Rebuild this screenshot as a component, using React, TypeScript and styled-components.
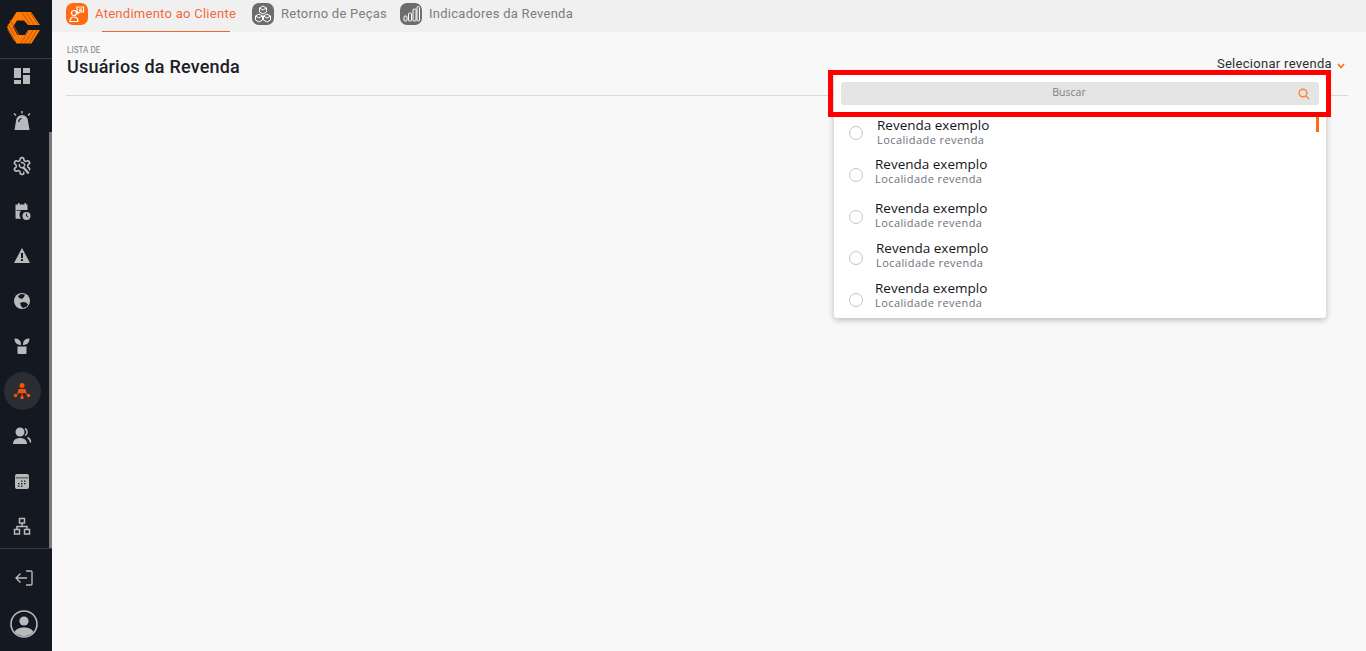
import React from 'react';
import styled, { createGlobalStyle } from 'styled-components';

const orange = '#ff6a13';
const iconGray = '#b9babc';

const GlobalStyle = createGlobalStyle`
  html, body {
    margin: 0;
    height: 100%;
    overflow: hidden;
    background: #f8f8f8;
    font-family: 'Roboto', 'Liberation Sans', sans-serif;
  }
`;

const Page = styled.div`
  display: flex;
  width: 100%;
  height: 651px;
  overflow: hidden;
`;

const SideBar = styled.aside`
  flex: 0 0 52px;
  display: flex;
  flex-direction: column;
  background: #141820;
`;

const LogoArea = styled.div`
  flex: 0 0 59px;
  box-sizing: border-box;
  padding: 12px 0 0 7px;
  border-bottom: 1px solid #3a3d42;
`;

const NavArea = styled.nav`
  position: relative;
  flex: 1;
  display: flex;
  flex-direction: column;
  gap: 25px;
  padding: 7px 0 0 12px;
`;

const ScrollThumb = styled.div`
  position: absolute;
  top: 73px;
  right: 0;
  bottom: 0;
  width: 3px;
  background: #77787b;
`;

const NavItem = styled.div<{ $active?: boolean }>`
  position: relative;
  width: 20px;
  height: 20px;
  color: ${({ $active }) => ($active ? '#ff4f0a' : iconGray)};
  svg {
    position: relative;
    display: block;
    width: 20px;
    height: 20px;
  }
  &::before {
    content: '';
    display: ${({ $active }) => ($active ? 'block' : 'none')};
    position: absolute;
    top: -9px;
    left: -8px;
    width: 37px;
    height: 38px;
    border-radius: 50%;
    background: #2a2d31;
  }
`;

const BottomArea = styled.div`
  flex: 0 0 103px;
  box-sizing: border-box;
  border-top: 1px solid #3a3d42;
  display: flex;
  flex-direction: column;
  align-items: flex-start;
  padding: 20px 0 0 10px;
  color: ${iconGray};
`;

const ExitIcon = styled.svg`
  width: 20px;
  height: 18px;
  margin-left: 4px;
`;

const UserIcon = styled.svg`
  width: 28px;
  height: 28px;
  margin-top: 23px;
`;

const Main = styled.main`
  position: relative;
  flex: 1;
  min-width: 0;
  background: #f8f8f8;
`;

const TabBar = styled.div`
  display: flex;
  gap: 15px;
  height: 32px;
  padding: 3px 0 0 14px;
  box-sizing: border-box;
  background: #f0f0f0;
`;

const Tab = styled.div<{ $active?: boolean; $width: number }>`
  position: relative;
  flex: 0 0 ${({ $width }) => $width}px;
  min-width: 0;
  display: flex;
  gap: 7px;
  height: 29px;
  color: ${({ $active }) => ($active ? '#f4683a' : '#7d7d7d')};
  font-size: 13px;
  letter-spacing: 0.27px;
  line-height: 22px;
  white-space: nowrap;
  &::after {
    content: '';
    display: ${({ $active }) => ($active ? 'block' : 'none')};
    position: absolute;
    left: 36px;
    right: 7px;
    bottom: 0;
    height: 1px;
    background: #f0672e;
  }
`;

const TabIcon = styled.div<{ $active?: boolean }>`
  flex: none;
  width: 22px;
  height: 22px;
  border-radius: 7px;
  background: ${({ $active }) => ($active ? orange : '#6c6c6c')};
  color: #fff;
  svg {
    display: block;
    width: 22px;
    height: 22px;
  }
`;

const Header = styled.header`
  display: flex;
  justify-content: space-between;
  box-sizing: border-box;
  height: 64px;
  margin: 0 18px 0 14px;
  padding: 13px 3px 0 1px;
  border-bottom: 1px solid #d8d8d8;
`;

const Eyebrow = styled.div`
  color: #7c7f85;
  font-size: 8.2px;
  line-height: 10px;
  text-transform: uppercase;
`;

const Title = styled.h1`
  margin: 0;
  color: #1c2026;
  font-size: 18px;
  font-weight: 500;
  letter-spacing: 0.2px;
  line-height: 23px;
`;

const RevendaPicker = styled.div`
  display: flex;
  gap: 5px;
  padding-top: 11px;
  color: #2b2f36;
  font-size: 13px;
  letter-spacing: 0.3px;
  line-height: 16px;
  svg {
    width: 8px;
    height: 6px;
    margin-top: 7px;
    color: ${orange};
  }
`;

const Dropdown = styled.div`
  position: absolute;
  top: 72px;
  left: 782px;
  width: 492px;
  height: 246px;
  background: #fff;
  border-radius: 0 0 3px 3px;
  box-shadow: 0 2px 6px rgba(0, 0, 0, 0.25);
`;

const SearchBox = styled.div`
  position: relative;
  height: 23px;
  margin: 10px 7px 0;
  padding-right: 22px;
  border-radius: 3px;
  background: #e4e4e4;
  color: #7f7f7f;
  font-family: 'Open Sans', 'Liberation Sans', sans-serif;
  font-size: 10.5px;
  line-height: 21px;
  text-align: center;
  svg {
    position: absolute;
    top: 6px;
    right: 9px;
    width: 12px;
    height: 12px;
    color: #ff8330;
  }
`;

const ScrollMark = styled.div`
  position: absolute;
  top: 45px;
  right: 7px;
  width: 3px;
  height: 15px;
  background: ${orange};
`;

const List = styled.ul`
  list-style: none;
  margin: 13px 0 0;
  padding: 0 0 0 15px;
`;

const Row = styled.li<{ $gap: number; $height: number; $drop: number }>`
  display: flex;
  align-items: flex-start;
  gap: ${({ $gap }) => $gap}px;
  height: ${({ $height }) => $height}px;
  &::before {
    content: '';
    flex: none;
    box-sizing: border-box;
    width: 14px;
    height: 14px;
    margin-top: ${({ $drop }) => $drop}px;
    border: 1px solid #c4c4c4;
    border-radius: 50%;
  }
`;

const RowText = styled.div`
  font-family: 'Open Sans', 'Liberation Sans', sans-serif;
`;

const RowName = styled.div`
  color: #14161a;
  font-size: 13.5px;
  line-height: 15px;
`;

const RowPlace = styled.div`
  color: #70707a;
  font-size: 11px;
  letter-spacing: 0.42px;
  line-height: 13px;
`;

const Highlight = styled.div`
  position: absolute;
  top: 70px;
  left: 776px;
  box-sizing: border-box;
  width: 503px;
  height: 47px;
  border: 5px solid #f00;
  pointer-events: none;
`;

const Logo = () => (
  <svg width="34" height="32" viewBox="0 0 34 32">
    <path fill="#ff7a06" d="M9.500 0h14.500l9 13H21l-4-4.500h-7L6 15l4.500 8H18l3-5h12l-8.500 13.500H9.500L0 15z" />
    <path stroke="#c25600" strokeWidth="1" fill="none" d="M15 .5l8 12M19 .5l8 12M23 .5l8 12M1 12l7 12M3 8l9 15M.5 17l7 12M22 18l-8 13M26 18l-8 13M30 18l-8 13" />
  </svg>
);

const navIcons: { key: string; active?: boolean; icon: React.ReactNode }[] = [
  {
    key: 'dashboard',
    icon: (
      <svg viewBox="0 0 20 20" fill="currentColor">
        <path d="M2 2h7v10H2zM11 2h7v5h-7zM11 9h7v9h-7zM2 14h7v4H2z" />
      </svg>
    ),
  },
  {
    key: 'alarm',
    icon: (
      <svg viewBox="0 0 20 20" fill="currentColor">
        <path d="M2.500 19 4 10a6 6 0 0 1 12 0l1.500 9z" />
        <path stroke="currentColor" strokeWidth="1.400" d="M10 0v2.500M2 2.500l2 2M18 2.500l-2 2" />
        <path stroke="#141820" strokeWidth="1.200" fill="none" d="M6.800 11A3.500 3.500 0 0 1 9.500 7.500" />
      </svg>
    ),
  },
  {
    key: 'repair',
    icon: (
      <svg viewBox="0 0 24 24" fill="none" stroke="currentColor" strokeWidth="2">
        <path d="M12.220 2h-.44a2 2 0 0 0-2 2v.18a2 2 0 0 1-1 1.730l-.43.25a2 2 0 0 1-2 0l-.15-.08a2 2 0 0 0-2.730.73l-.22.38a2 2 0 0 0 .73 2.730l.15.1a2 2 0 0 1 1 1.720v.51a2 2 0 0 1-1 1.740l-.15.09a2 2 0 0 0-.73 2.730l.22.38a2 2 0 0 0 2.730.73l.15-.08a2 2 0 0 1 2 0l.43.25a2 2 0 0 1 1 1.730V20a2 2 0 0 0 2 2h.44a2 2 0 0 0 2-2v-.18a2 2 0 0 1 1-1.730l.43-.25a2 2 0 0 1 2 0l.15.08a2 2 0 0 0 2.730-.73l.22-.39a2 2 0 0 0-.73-2.730l-.15-.08a2 2 0 0 1-1-1.740v-.5a2 2 0 0 1 1-1.740l.15-.09a2 2 0 0 0 .73-2.730l-.22-.38a2 2 0 0 0-2.730-.73l-.15.08a2 2 0 0 1-2 0l-.43-.25a2 2 0 0 1-1-1.730V4a2 2 0 0 0-2-2z" />
        <path stroke="#141820" strokeWidth="6" d="m14 14 7 8" />
        <path strokeWidth="2.800" d="m13 13 7 8" />
        <path strokeWidth="1.800" d="M9 9.500a3.500 3.500 0 0 0 4.500 4.500M10.500 8a3.500 3.500 0 0 1 4.500 4.500" />
      </svg>
    ),
  },
  {
    key: 'schedule',
    icon: (
      <svg viewBox="0 0 20 20" fill="currentColor">
        <path d="M6 2h1.500v1.500h5V2H14v1.500h1.500V9H4.500v.8H9a6 6 0 0 0 0 8H4.500a1 1 0 0 1-1-1V3.500H6z" />
        <circle cx="14.500" cy="15" r="4" />
        <path stroke="#141820" fill="none" d="M14.500 12.500V15l1.800 1.200" />
      </svg>
    ),
  },
  {
    key: 'warning',
    icon: (
      <svg viewBox="0 0 20 20" fill="currentColor" fillRule="evenodd">
        <path d="M10 2 18 17H2zM9 7v5h2V7zm0 6v2h2v-2z" />
      </svg>
    ),
  },
  {
    key: 'globe',
    icon: (
      <svg viewBox="0 0 20 20" fill="currentColor">
        <path d="M10 2a8 8 0 1 0 0 16 8 8 0 0 0 0-16z" />
        <path fill="#141820" d="M9 3 6 5l1 2 3 1 2-2 1-2.500zM11 11l-3 1 1 3 2 2 4-1.500 1-2-2-2z" />
      </svg>
    ),
  },
  {
    key: 'plant',
    icon: (
      <svg viewBox="0 0 20 20" fill="currentColor">
        <path d="M2.500 2.500c3 0 6.500 1 6.500 6v.5C5.500 9 2.500 7 2.500 2.500zM17.500 2.500c-3 0-6.500 1-6.500 6v.5c3.500 0 6.500-2 6.500-6.500zM5.500 10.500h9V17a1 1 0 0 1-1 1h-7a1 1 0 0 1-1-1z" />
      </svg>
    ),
  },
  {
    key: 'network',
    active: true,
    icon: (
      <svg viewBox="0 0 20 20" fill="currentColor">
        <circle cx="10" cy="4.500" r="2.500" />
        <path d="M6.500 8h7l1 4h-9z" />
        <circle cx="3.500" cy="14.500" r="1.700" />
        <circle cx="16.500" cy="14.500" r="1.700" />
        <circle cx="10" cy="16.500" r="1.700" />
        <path stroke="currentColor" d="m3.500 14.500 3.500-3M16.500 14.500 13 11.500M10 16.500V11" />
      </svg>
    ),
  },
  {
    key: 'people',
    icon: (
      <svg viewBox="0 0 20 20" fill="currentColor">
        <circle cx="8" cy="6" r="4.500" />
        <path d="M1 18c0-4 3-6 7-6s7 2 7 6z" />
        <path fill="none" stroke="currentColor" strokeWidth="1.500" d="M13 2.500a4 4 0 0 1 0 7M15.500 11.500c2 1 3 3 3 5" />
      </svg>
    ),
  },
  {
    key: 'calendar',
    icon: (
      <svg viewBox="0 0 20 20" fill="currentColor" fillRule="evenodd">
        <path d="M5 3h10a2 2 0 0 1 2 2v11a2 2 0 0 1-2 2H5a2 2 0 0 1-2-2V5a2 2 0 0 1 2-2zM3.500 6.500v.7h13v-.7zM9 9.500v1.200h1.500V9.500zm3 0v1.200h1.500V9.500zm-6 2.500v1.200h1.500V12zm3 0v1.200h1.500V12zm3 0v1.200h1.500V12zM6 14.500v1.200h1.500v-1.200zm3 0v1.200h1.500v-1.200z" />
      </svg>
    ),
  },
  {
    key: 'org',
    icon: (
      <svg viewBox="0 0 20 20" fill="none" stroke="currentColor" strokeWidth="1.500">
        <path d="M7.500 2.500h5v4.500h-5zM2.500 13.500h5V18h-5zM12.500 13.500h5V18h-5zM10 7v3.500M5 13.500v-3h10v3" />
      </svg>
    ),
  },
];

const tabs = [
  {
    label: 'Atendimento ao Cliente',
    active: true,
    width: 171,
    icon: (
      <svg viewBox="0 0 22 22" fill="none" stroke="currentColor" strokeWidth="1.200">
        <circle cx="8" cy="10" r="2.500" />
        <path d="M4 18.500c0-3.500 1.500-4.500 4-4.500s4 1 4 4.500zM11 4h6.500v5H14l-2 1.500V9h-1zM13 6h3M13 7.500h3" />
      </svg>
    ),
  },
  {
    label: 'Retorno de Peças',
    width: 133,
    icon: (
      <svg viewBox="0 0 22 22" fill="none" stroke="currentColor" strokeWidth="1">
        <path d="m11 3 3.500 2v4L11 11 7.500 9V5zM7 11l3.500 2v4L7 19l-3.500-2v-4zM15 11l3.500 2v4L15 19l-3.500-2v-4zM7.500 5 11 7l3.500-2M3.500 13 7 15l3.500-2M11.500 13l3.500 2 3.500-2" />
      </svg>
    ),
  },
  {
    label: 'Indicadores da Revenda',
    width: 172,
    icon: (
      <svg viewBox="0 0 22 22" fill="none" stroke="currentColor" strokeWidth="1">
        <rect x="4" y="13" width="3" height="5" rx="1" />
        <rect x="8.500" y="10" width="3" height="8" rx="1" />
        <rect x="13" y="6" width="3" height="12" rx="1" />
        <rect x="17" y="3.500" width="2.500" height="14.500" rx="1" />
      </svg>
    ),
  },
];

const rows = [
  { gap: 14, height: 39, drop: 8 },
  { gap: 12, height: 44, drop: 11 },
  { gap: 12, height: 40, drop: 9 },
  { gap: 13, height: 40, drop: 10 },
  { gap: 12, height: 37, drop: 12 },
];

const App = () => (
  <Page>
    <GlobalStyle />
    <SideBar>
      <LogoArea>
        <Logo />
      </LogoArea>
      <NavArea>
        {navIcons.map((item) => (
          <NavItem key={item.key} $active={item.active}>
            {item.icon}
          </NavItem>
        ))}
        <ScrollThumb />
      </NavArea>
      <BottomArea>
        <ExitIcon viewBox="0 0 20 18" fill="none" stroke="currentColor" strokeWidth="1.400">
          <path d="M12 2h5a1 1 0 0 1 1 1v12a1 1 0 0 1-1 1h-5M13 9H2M6.500 4.500 2 9l4.500 4.500" />
        </ExitIcon>
        <UserIcon viewBox="0 0 28 28">
          <circle cx="14" cy="14" r="13" fill="none" stroke="currentColor" strokeWidth="1.600" />
          <circle cx="14" cy="11" r="4.600" fill="currentColor" />
          <path fill="currentColor" d="M4.500 22c2-3.500 5.500-4.500 9.500-4.500s7.500 1 9.500 4.500a13 13 0 0 1-19 0z" />
        </UserIcon>
      </BottomArea>
    </SideBar>
    <Main>
      <TabBar>
        {tabs.map((tab) => (
          <Tab key={tab.label} $active={tab.active} $width={tab.width}>
            <TabIcon $active={tab.active}>{tab.icon}</TabIcon>
            {tab.label}
          </Tab>
        ))}
      </TabBar>
      <Header>
        <div>
          <Eyebrow>Lista de</Eyebrow>
          <Title>Usuários da Revenda</Title>
        </div>
        <RevendaPicker>
          Selecionar revenda
          <svg viewBox="0 0 8 6" fill="none" stroke="currentColor" strokeWidth="1.600">
            <path d="m1 1 3 3.500L7 1" />
          </svg>
        </RevendaPicker>
      </Header>
      <Dropdown>
        <SearchBox>
          Buscar
          <svg viewBox="0 0 12 12" fill="none" stroke="currentColor" strokeWidth="1.400">
            <circle cx="5" cy="5" r="3.800" />
            <path d="m8 8 3 3" />
          </svg>
        </SearchBox>
        <ScrollMark />
        <List>
          {rows.map((row, index) => (
            <Row key={index} $gap={row.gap} $height={row.height} $drop={row.drop}>
              <RowText>
                <RowName>Revenda exemplo</RowName>
                <RowPlace>Localidade revenda</RowPlace>
              </RowText>
            </Row>
          ))}
        </List>
      </Dropdown>
      <Highlight />
    </Main>
  </Page>
);

export default App;
